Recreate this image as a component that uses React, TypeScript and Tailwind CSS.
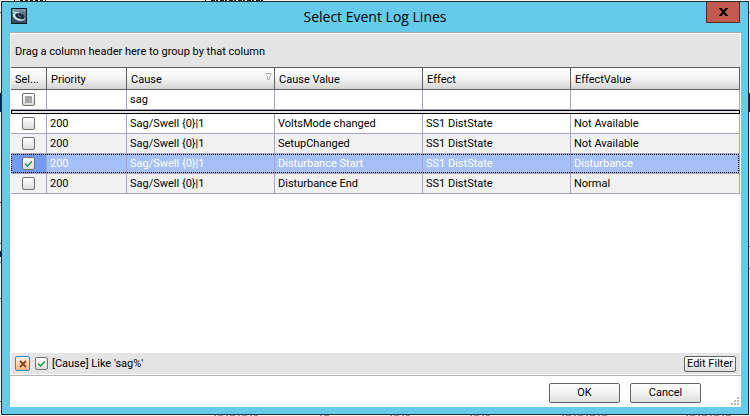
import { useEffect, useRef, useState } from "react";

type LogLine = { priority: string; cause: string; value: string; effect: string; effectValue: string };

const lines: LogLine[] = [
  { priority: "200", cause: "Sag/Swell {0}|1", value: "VoltsMode changed", effect: "SS1 DistState", effectValue: "Not Available" },
  { priority: "200", cause: "Sag/Swell {0}|1", value: "SetupChanged", effect: "SS1 DistState", effectValue: "Not Available" },
  { priority: "200", cause: "Sag/Swell {0}|1", value: "Disturbance Start", effect: "SS1 DistState", effectValue: "Disturbance" },
  { priority: "200", cause: "Sag/Swell {0}|1", value: "Disturbance End", effect: "SS1 DistState", effectValue: "Normal" },
];

const headers = ["Sel...", "Priority", "Cause", "Cause Value", "Effect", "EffectValue"];

type TickBoxProps = { label: string; checked: boolean; mixed?: boolean; onChange: (v: boolean) => void };

function TickBox({ label, checked, mixed = false, onChange }: TickBoxProps) {
  const ref = useRef<HTMLInputElement>(null);
  useEffect(() => {
    if (ref.current) ref.current.indeterminate = mixed;
  }, [mixed]);
  return (
    <span className="grid size-[13px] shrink-0">
      <input
        ref={ref}
        type="checkbox"
        aria-label={label}
        checked={checked}
        onChange={(e) => onChange(e.target.checked)}
        className="col-start-1 row-start-1 size-[13px] appearance-none rounded-[2px] border border-[#707070] bg-linear-to-b from-white to-[#dcdcdc]"
      />
      {mixed && <span className="pointer-events-none col-start-1 row-start-1 m-[3px] bg-[#a8a8a8]" />}
      {checked && !mixed && (
        <svg viewBox="0 0 13 13" className="pointer-events-none col-start-1 row-start-1 size-[13px]" fill="none" stroke="#169a4c" strokeWidth="1.5">
          <path d="M3 6.500 L5.500 9 L10 4.500" />
        </svg>
      )}
    </span>
  );
}

function Backdrop() {
  return (
    <svg className="absolute inset-0 size-full" aria-hidden="true">
      <rect width="100%" height="100%" fill="#f4f4f2" />
      <g stroke="#222" strokeWidth="1">
        <path d="M20 .5h26" strokeDasharray="3 2" />
        <path d="M211 .5h52" strokeDasharray="4 1 2 2" />
        <path d="M14.5 0v1M205.5 0v1" />
      </g>
      <g fill="#0b1f55">
        <rect y="93" width="1" height="19" />
        <rect x="749" y="93" width="1" height="19" />
        <rect y="251" width="1" height="6" />
      </g>
      <g fill="#666">
        <rect y="12" width="1" height="1" />
        <rect y="202" width="1" height="1" fill="#a03010" />
        <rect y="243" width="1" height="1" />
        <rect y="262" width="1" height="1" />
        <rect y="298" width="1" height="1" />
        <rect y="401" width="1" height="1" />
        <rect x="749" y="12" width="1" height="1" />
        <rect x="749" y="246" width="1" height="1" />
        <rect x="749" y="268" width="1" height="1" />
      </g>
      <g stroke="#99a" strokeWidth="1">
        <path d="M214 415.5h44M320 415.5h10M390 415.5h20M470 415.5h20M562 415.5h46M686 415.5h46" strokeDasharray="2 2 5 3" />
      </g>
    </svg>
  );
}

const pushButton =
  "rounded-[2px] border border-[#5f6662] bg-linear-to-b from-white via-[#f4f4f4] to-[#dedede] text-center text-black";

export default function App() {
  const [picked, setPicked] = useState([false, false, true, false]);
  const [filter, setFilter] = useState("sag");
  const [filterOn, setFilterOn] = useState(true);
  const active = 2;

  return (
    <div className="relative flex h-screen p-px font-[Roboto,sans-serif] text-[11px] leading-[14px] text-black">
      <Backdrop />
      <div role="dialog" aria-labelledby="title" className="relative flex grow flex-col border border-[#262b30] bg-[#66cbea] px-[7px] pb-[7px]">
        <header className="grid h-[30px] grid-cols-[1fr_auto_1fr] items-start">
          <svg viewBox="0 0 16 16" className="mt-1.5 ml-0.5 size-4" aria-hidden="true">
            <rect width="16" height="16" fill="#0e151d" />
            <rect x="1" y="1" width="14" height="14" fill="#5b7488" />
            <path d="M1 1h14v3Q8 2 1 5Z" fill="#7d93a4" />
            <path d="M1 8 Q4 14 15 13v2H1Z" fill="#3a5064" />
            <ellipse cx="8" cy="8.500" rx="6.200" ry="4" transform="rotate(20 8 8.500)" fill="#dbe5ec" />
            <ellipse cx="9" cy="8" rx="5" ry="2.800" transform="rotate(20 9 8)" fill="#1c2c3c" />
            <path d="M2 3.500 Q4 5 8 5" stroke="#e4ecf2" fill="none" />
            <path d="M7 7.500 L10 9" stroke="#7f97aa" />
          </svg>
          <h1 id="title" className="mt-1 font-['Open_Sans',sans-serif] text-sm leading-[22px]">Select Event Log Lines</h1>
          <button type="button" aria-label="Close" className="mr-px flex h-[21px] w-[34px] items-center justify-center justify-self-end border border-t-0 border-[#5a2a2a] bg-[#c35a50]">
            <svg viewBox="0 0 9 8" className="h-2 w-[9px]" stroke="#000" strokeWidth="2" fill="none">
              <path d="M1.500 .5 L7.500 7.500 M7.500 .5 L1.500 7.500" />
              <path d="M0 .5h3M6 .5h3M0 7.500h3M6 7.500h3" strokeWidth="1" />
            </svg>
          </button>
        </header>

        <div className="flex min-h-0 grow flex-col border-t border-l border-[#b0a8ac] bg-white">
          <main className="flex min-h-0 grow flex-col border-b border-[#b4b4b4] px-px pt-px">
            <p className="bg-[#e5e5e5] px-1 pt-[11px] pb-2 leading-[14px]">Drag a column header here to group by that column</p>
            <table className="w-full table-fixed border-separate border-spacing-0 text-left">
              <colgroup>
                <col className="w-9" />
                <col className="w-20" />
                <col className="w-[148px]" />
                <col className="w-[148px]" />
                <col className="w-[148px]" />
                <col />
              </colgroup>
              <thead>
                <tr>
                  {headers.map((h) => (
                    <th key={h} scope="col" className="h-[23px] border-y border-r border-[#5f5f5f] bg-linear-to-b from-white via-[#f4f4f4] to-[#d4d4d4] p-0 pt-0.5 pl-1 font-normal">
                      <span className="flex justify-between">
                        {h}
                        {h === "Cause" && (
                          <svg viewBox="0 0 7 7" className="mr-0.5 size-[7px]" fill="none" stroke="#b0b0b0">
                            <path d="M.5 .5h6v1L4.500 3.500v3h-2v-3L.5 1.500Z" />
                          </svg>
                        )}
                      </span>
                    </th>
                  ))}
                </tr>
                <tr>
                  {headers.map((h, i) => (
                    <td key={h} className="h-5 border-r border-b border-[#a8a4c0] bg-white p-0">
                      {i === 0 && (
                        <div className="flex justify-center">
                          <TickBox label="Filter by selection" checked={false} mixed onChange={() => {}} />
                        </div>
                      )}
                      {i === 2 && (
                        <input aria-label="Filter Cause" value={filter} onChange={(e) => setFilter(e.target.value)} className="block h-[14px] w-full bg-transparent px-[3px] outline-none" />
                      )}
                    </td>
                  ))}
                </tr>
              </thead>
              <tbody>
                <tr aria-hidden="true">
                  <td colSpan={6} className="h-1 border border-black bg-[#e5e5e5] p-0 leading-[0]" />
                </tr>
                {lines.map((l, i) => {
                  const on = i === active;
                  const row = on ? "bg-[#a6c1fa] text-white" : i % 2 ? "bg-[#f2f2f2]" : "bg-white";
                  const cell = "h-5 border-r border-b border-[#a8a4c0] p-0";
                  const inner = on ? "border-y border-dotted border-black" : "border-y border-transparent";
                  return (
                    <tr key={i} className={row}>
                      <td className={cell}>
                        <div className={`flex h-[19px] items-center justify-center ${inner} ${on ? "border-l bg-[#739bf2] pr-px" : ""}`}>
                          <TickBox label={`Select line ${i + 1}`} checked={picked[i]} onChange={(v) => setPicked(picked.map((p, j) => (j === i ? v : p)))} />
                        </div>
                      </td>
                      {[l.priority, l.cause, l.value, l.effect, l.effectValue].map((t, j) => (
                        <td key={j} className={cell}>
                          <div className={`flex h-[19px] items-center px-[3px] ${inner} ${on && j === 4 ? "border-r" : ""}`}>{t}</div>
                        </td>
                      ))}
                    </tr>
                  );
                })}
              </tbody>
            </table>
            <div className="grow" />
            <div className="mb-px flex h-[21px] items-center bg-[#e5e5e5] px-1">
              <button type="button" aria-label="Clear filter" className="flex size-[15px] items-center justify-center rounded-[2px] border border-[#2f8bc0] bg-linear-to-b from-[#fdeee2] to-[#f8b684]">
                <svg viewBox="0 0 8 8" className="size-2" stroke="#8a4516" strokeWidth="1.800">
                  <path d="M1 1 L7 7 M7 1 L1 7" />
                </svg>
              </button>
              <div className="ml-[5px] flex grow items-center gap-1">
                <TickBox label="Filter enabled" checked={filterOn} onChange={setFilterOn} />
                <span>[Cause] Like 'sag%'</span>
              </div>
              <button type="button" className={`${pushButton} h-4 w-[52px] leading-[14px] whitespace-nowrap`}>Edit Filter</button>
            </div>
          </main>
          <footer className="flex h-[31px] items-start justify-end">
            <div className="flex gap-[10px] pt-[7px]">
              <button type="button" className={`${pushButton} h-5 w-[71px]`}>OK</button>
              <button type="button" className={`${pushButton} h-5 w-[71px]`}>Cancel</button>
            </div>
            <svg viewBox="0 0 8 8" className="mr-0.5 mb-0.5 ml-[30px] size-2 self-end" fill="#b8b8b8" aria-hidden="true">
              <path d="M6 0h2v2h-2zM3 3h2v2h-2zM6 3h2v2h-2zM0 6h2v2h-2zM3 6h2v2h-2zM6 6h2v2h-2z" />
            </svg>
          </footer>
        </div>
      </div>
    </div>
  );
}
